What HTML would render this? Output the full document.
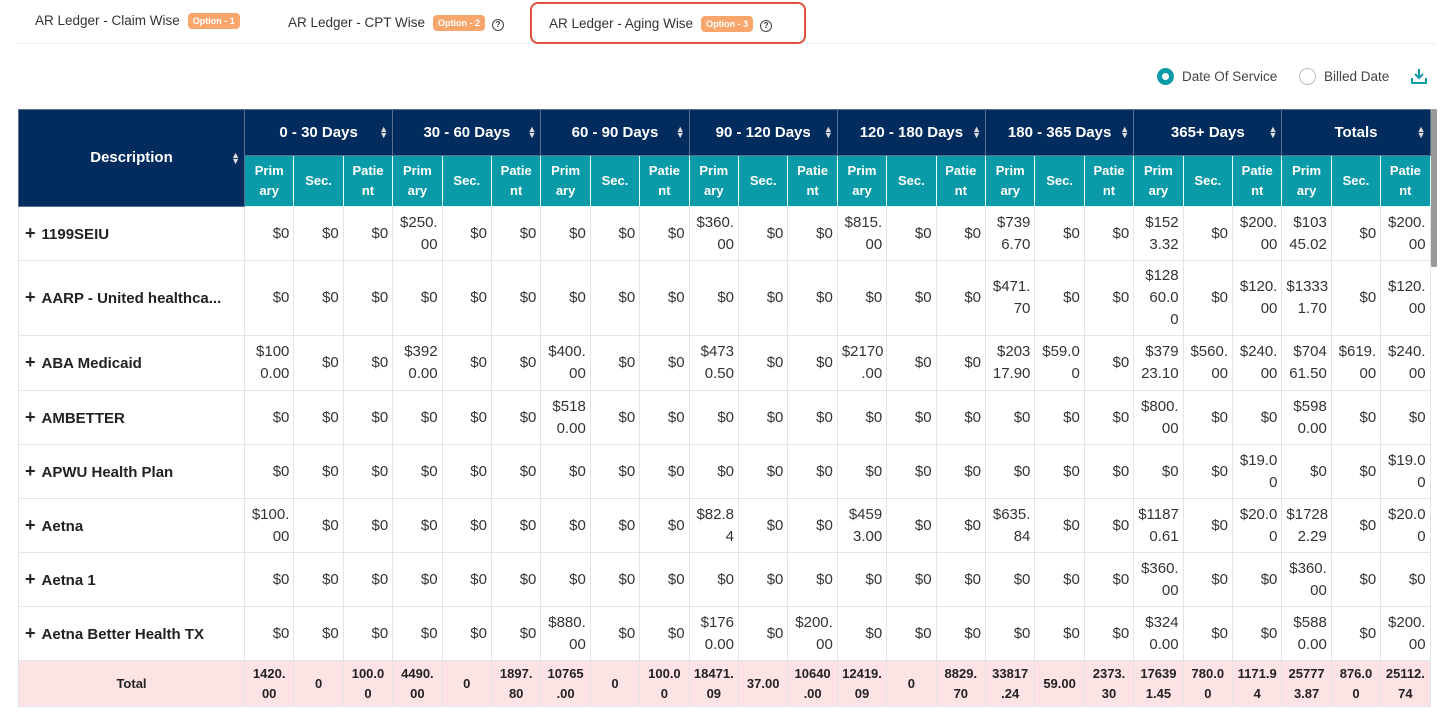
<!DOCTYPE html>
<html><head><meta charset="utf-8"><style>
*{box-sizing:border-box;margin:0;padding:0}
body{width:1450px;height:719px;background:#fff;font-family:"Liberation Sans",sans-serif;color:#222;position:relative;overflow:hidden}
.tab{position:absolute;font-size:13.5px;color:#333;line-height:16px}
.badge{display:inline-block;background:#f9a66c;color:#fff;font-size:9px;font-weight:bold;padding:3px 5px;border-radius:4px;margin-left:8px;vertical-align:1px;line-height:10px}
.q{display:inline-block;width:12px;height:12px;border:1.3px solid #444;border-radius:50%;font-size:8px;text-align:center;line-height:10px;margin-left:7px;font-weight:bold;vertical-align:0px}
table{position:absolute;left:18px;top:109px;border-collapse:collapse;table-layout:fixed;width:1412px}
td,th{border:1px solid #e1e4e8;font-size:15px;line-height:22px;white-space:nowrap;overflow:hidden}
th{color:#fff;font-weight:bold}
.g{background:#022c5e;height:46px;font-size:15px;border-color:#5a7091;position:relative}
.s{background:#0b9aa8;font-size:13px;line-height:20px;height:51px;border-color:#dff;text-align:center}
.ar{position:absolute;right:4px;top:16px;font-size:9px;line-height:6px;color:#ddd}
td{text-align:right;padding:0 4px;color:#333}
td.d{text-align:left;font-weight:bold;padding-left:6px;font-size:15px;color:#222}
td.d b{font-size:18px;margin-right:6px}
tr.tot td{background:#fde3e3;font-weight:bold;font-size:13px;line-height:20px;text-align:center;color:#222}
</style></head><body>
<div class="tab" style="left:35px;top:13px">AR Ledger - Claim Wise<span class="badge">Option - 1</span></div>
<div class="tab" style="left:288px;top:15px">AR Ledger - CPT Wise<span class="badge">Option - 2</span><span class="q">?</span></div>
<div style="position:absolute;left:18px;top:43px;width:1418px;height:1px;background:#eceef6"></div>
<div style="position:absolute;left:530px;top:2px;width:276px;height:42px;border:2px solid #e0503c;border-radius:8px;background:#fff"></div>
<div class="tab" style="left:549px;top:16px">AR Ledger - Aging Wise<span class="badge">Option - 3</span><span class="q">?</span></div>
<div style="position:absolute;left:1157px;top:68px;width:17px;height:17px;border-radius:50%;background:#0b9aa8"><div style="position:absolute;left:5px;top:5px;width:7px;height:7px;border-radius:50%;background:#fff"></div></div>
<div class="tab" style="left:1182px;top:69px;color:#444">Date Of Service</div>
<div style="position:absolute;left:1299px;top:68px;width:17px;height:17px;border-radius:50%;border:1px solid #bbb"></div>
<div class="tab" style="left:1324px;top:69px;color:#444">Billed Date</div>
<svg style="position:absolute;left:1410px;top:67px" width="18" height="18" viewBox="0 0 18 18" fill="none" stroke="#0b9aa8" stroke-width="2"><path d="M9 2v9M5 7l4 4 4-4M2 11v5h14v-5"/></svg>
<div style="position:absolute;left:1431px;top:109px;width:6px;height:158px;background:#999;border-radius:2px"></div>
<table>
<colgroup><col style="width:226px"><col span="24" style="width:49.4px"></colgroup>
<tr><th class="g" rowspan="2" style="height:97px">Description<span class="ar" style="top:42px">▲<br>▼</span></th>
<th class="g" colspan="3">0 - 30 Days<span class="ar">▲<br>▼</span></th><th class="g" colspan="3">30 - 60 Days<span class="ar">▲<br>▼</span></th><th class="g" colspan="3">60 - 90 Days<span class="ar">▲<br>▼</span></th><th class="g" colspan="3">90 - 120 Days<span class="ar">▲<br>▼</span></th><th class="g" colspan="3">120 - 180 Days<span class="ar">▲<br>▼</span></th><th class="g" colspan="3">180 - 365 Days<span class="ar">▲<br>▼</span></th><th class="g" colspan="3">365+ Days<span class="ar">▲<br>▼</span></th><th class="g" colspan="3">Totals<span class="ar">▲<br>▼</span></th></tr>
<tr>
<th class="s">Prim<br>ary</th><th class="s">Sec.</th><th class="s">Patie<br>nt</th><th class="s">Prim<br>ary</th><th class="s">Sec.</th><th class="s">Patie<br>nt</th><th class="s">Prim<br>ary</th><th class="s">Sec.</th><th class="s">Patie<br>nt</th><th class="s">Prim<br>ary</th><th class="s">Sec.</th><th class="s">Patie<br>nt</th><th class="s">Prim<br>ary</th><th class="s">Sec.</th><th class="s">Patie<br>nt</th><th class="s">Prim<br>ary</th><th class="s">Sec.</th><th class="s">Patie<br>nt</th><th class="s">Prim<br>ary</th><th class="s">Sec.</th><th class="s">Patie<br>nt</th><th class="s">Prim<br>ary</th><th class="s">Sec.</th><th class="s">Patie<br>nt</th></tr>
<tr style="height:54px"><td class="d"><b>+</b>1199SEIU</td><td>$0</td><td>$0</td><td>$0</td><td>$250.<br>00</td><td>$0</td><td>$0</td><td>$0</td><td>$0</td><td>$0</td><td>$360.<br>00</td><td>$0</td><td>$0</td><td>$815.<br>00</td><td>$0</td><td>$0</td><td>$739<br>6.70</td><td>$0</td><td>$0</td><td>$152<br>3.32</td><td>$0</td><td>$200.<br>00</td><td>$103<br>45.02</td><td>$0</td><td>$200.<br>00</td></tr>
<tr style="height:75px"><td class="d"><b>+</b>AARP - United healthca...</td><td>$0</td><td>$0</td><td>$0</td><td>$0</td><td>$0</td><td>$0</td><td>$0</td><td>$0</td><td>$0</td><td>$0</td><td>$0</td><td>$0</td><td>$0</td><td>$0</td><td>$0</td><td>$471.<br>70</td><td>$0</td><td>$0</td><td>$128<br>60.0<br>0</td><td>$0</td><td>$120.<br>00</td><td>$1333<br>1.70</td><td>$0</td><td>$120.<br>00</td></tr>
<tr style="height:55px"><td class="d"><b>+</b>ABA Medicaid</td><td>$100<br>0.00</td><td>$0</td><td>$0</td><td>$392<br>0.00</td><td>$0</td><td>$0</td><td>$400.<br>00</td><td>$0</td><td>$0</td><td>$473<br>0.50</td><td>$0</td><td>$0</td><td>$2170<br>.00</td><td>$0</td><td>$0</td><td>$203<br>17.90</td><td>$59.0<br>0</td><td>$0</td><td>$379<br>23.10</td><td>$560.<br>00</td><td>$240.<br>00</td><td>$704<br>61.50</td><td>$619.<br>00</td><td>$240.<br>00</td></tr>
<tr style="height:54px"><td class="d"><b>+</b>AMBETTER</td><td>$0</td><td>$0</td><td>$0</td><td>$0</td><td>$0</td><td>$0</td><td>$518<br>0.00</td><td>$0</td><td>$0</td><td>$0</td><td>$0</td><td>$0</td><td>$0</td><td>$0</td><td>$0</td><td>$0</td><td>$0</td><td>$0</td><td>$800.<br>00</td><td>$0</td><td>$0</td><td>$598<br>0.00</td><td>$0</td><td>$0</td></tr>
<tr style="height:54px"><td class="d"><b>+</b>APWU Health Plan</td><td>$0</td><td>$0</td><td>$0</td><td>$0</td><td>$0</td><td>$0</td><td>$0</td><td>$0</td><td>$0</td><td>$0</td><td>$0</td><td>$0</td><td>$0</td><td>$0</td><td>$0</td><td>$0</td><td>$0</td><td>$0</td><td>$0</td><td>$0</td><td>$19.0<br>0</td><td>$0</td><td>$0</td><td>$19.0<br>0</td></tr>
<tr style="height:54px"><td class="d"><b>+</b>Aetna</td><td>$100.<br>00</td><td>$0</td><td>$0</td><td>$0</td><td>$0</td><td>$0</td><td>$0</td><td>$0</td><td>$0</td><td>$82.8<br>4</td><td>$0</td><td>$0</td><td>$459<br>3.00</td><td>$0</td><td>$0</td><td>$635.<br>84</td><td>$0</td><td>$0</td><td>$1187<br>0.61</td><td>$0</td><td>$20.0<br>0</td><td>$1728<br>2.29</td><td>$0</td><td>$20.0<br>0</td></tr>
<tr style="height:54px"><td class="d"><b>+</b>Aetna 1</td><td>$0</td><td>$0</td><td>$0</td><td>$0</td><td>$0</td><td>$0</td><td>$0</td><td>$0</td><td>$0</td><td>$0</td><td>$0</td><td>$0</td><td>$0</td><td>$0</td><td>$0</td><td>$0</td><td>$0</td><td>$0</td><td>$360.<br>00</td><td>$0</td><td>$0</td><td>$360.<br>00</td><td>$0</td><td>$0</td></tr>
<tr style="height:54px"><td class="d"><b>+</b>Aetna Better Health TX</td><td>$0</td><td>$0</td><td>$0</td><td>$0</td><td>$0</td><td>$0</td><td>$880.<br>00</td><td>$0</td><td>$0</td><td>$176<br>0.00</td><td>$0</td><td>$200.<br>00</td><td>$0</td><td>$0</td><td>$0</td><td>$0</td><td>$0</td><td>$0</td><td>$324<br>0.00</td><td>$0</td><td>$0</td><td>$588<br>0.00</td><td>$0</td><td>$200.<br>00</td></tr>
<tr class="tot" style="height:46px"><td>Total</td><td>1420.<br>00</td><td>0</td><td>100.0<br>0</td><td>4490.<br>00</td><td>0</td><td>1897.<br>80</td><td>10765<br>.00</td><td>0</td><td>100.0<br>0</td><td>18471.<br>09</td><td>37.00</td><td>10640<br>.00</td><td>12419.<br>09</td><td>0</td><td>8829.<br>70</td><td>33817<br>.24</td><td>59.00</td><td>2373.<br>30</td><td>17639<br>1.45</td><td>780.0<br>0</td><td>1171.9<br>4</td><td>25777<br>3.87</td><td>876.0<br>0</td><td>25112.<br>74</td></tr>
</table>
</body></html>
